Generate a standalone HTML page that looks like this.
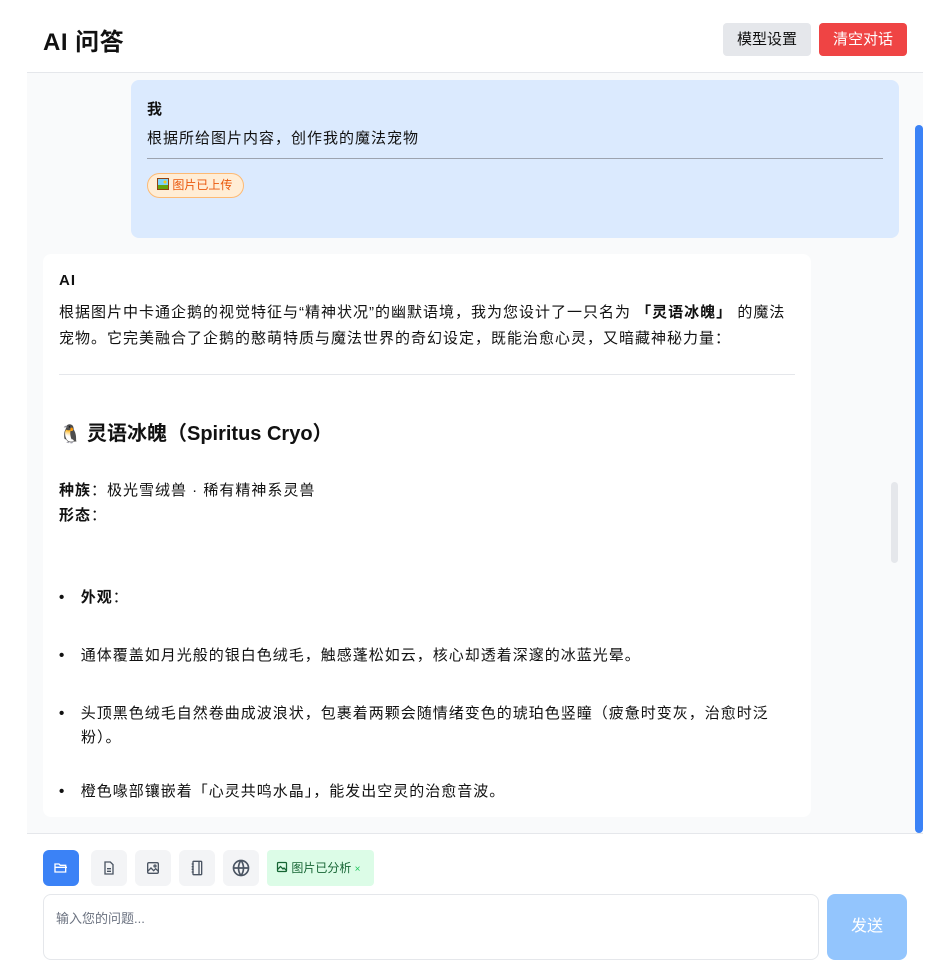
<!DOCTYPE html>
<html><head><meta charset="utf-8"><style>
*{box-sizing:border-box;margin:0;padding:0}
body{width:945px;height:966px;background:#fff;font-family:"Liberation Sans","Noto Sans CJK SC",sans-serif;color:#111;position:relative;overflow:hidden}
.a{position:absolute}
.t{font-size:15px;color:#111;white-space:nowrap;letter-spacing:1px}
.ib{position:absolute;top:850px;width:36px;height:36px;border-radius:6px;background:#f3f4f6;display:flex;align-items:center;justify-content:center}
</style></head><body>
<div class="a" style="left:43px;top:22px;font-size:24px;font-weight:bold;letter-spacing:0.5px">AI 问答</div>
<div class="a" style="left:723px;top:23px;width:88px;height:33px;background:#e5e7eb;border-radius:4px;font-size:15px;text-align:center;line-height:33px">模型设置</div>
<div class="a" style="left:819px;top:23px;width:88px;height:33px;background:#ef4444;color:#fff;border-radius:4px;font-size:15px;text-align:center;line-height:33px">清空对话</div>
<div class="a" style="left:27px;top:72px;width:896px;height:1px;background:#e5e7eb"></div>
<div class="a" style="left:27px;top:73px;width:896px;height:760px;background:#f9fafb"></div>
<div class="a" style="left:27px;top:833px;width:896px;height:1px;background:#e5e7eb"></div>
<div class="a" style="left:915px;top:125px;width:8px;height:708px;background:#3b82f6;border-radius:4px"></div>
<div class="a" style="left:891px;top:482px;width:7px;height:81px;background:#e5e7eb;border-radius:4px"></div>

<div class="a" style="left:131px;top:80px;width:768px;height:158px;background:#dbeafe;border-radius:8px"></div>
<div class="a t" style="left:147px;top:98px;font-weight:bold">我</div>
<div class="a t" style="left:147px;top:127px">根据所给图片内容，创作我的魔法宠物</div>
<div class="a" style="left:147px;top:158px;width:736px;height:1px;background:#9ca3af"></div>
<div class="a" style="left:147px;top:173px;width:97px;height:25px;background:#ffedd5;border:1px solid #fdba74;border-radius:13px;font-size:12px;color:#ea580c;line-height:23px;padding-left:9px;white-space:nowrap"><svg width="12" height="12" viewBox="0 0 12 12" style="vertical-align:-1px"><rect x="0.5" y="0.5" width="11" height="11" fill="#7dd3fc" stroke="#92400e"/><rect x="1" y="7" width="10" height="4" fill="#65a30d"/><circle cx="8" cy="4" r="1.5" fill="#facc15"/></svg> 图片已上传</div>

<div class="a" style="left:43px;top:254px;width:768px;height:563px;background:#fff;border-radius:8px"></div>
<div class="a t" style="left:59px;top:272px;font-weight:bold">AI</div>
<div class="a t" style="left:59px;top:301px">根据图片中卡通企鹅的视觉特征与“精神状况”的幽默语境，我为您设计了一只名为 <b>「灵语冰魄」</b> 的魔法</div>
<div class="a t" style="left:59px;top:327px">宠物。它完美融合了企鹅的憨萌特质与魔法世界的奇幻设定，既能治愈心灵，又暗藏神秘力量：</div>
<div class="a" style="left:59px;top:374px;width:736px;height:1px;background:#e5e7eb"></div>
<div class="a" style="left:59px;top:417px;font-size:20px;font-weight:bold;white-space:nowrap"><span style="font-size:18px">🐧</span>&nbsp;灵语冰魄（Spiritus Cryo）</div>
<div class="a t" style="left:59px;top:479px"><b>种族</b>：极光雪绒兽 · 稀有精神系灵兽</div>
<div class="a t" style="left:59px;top:504px"><b>形态</b>：</div>
<div class="a t" style="left:59px;top:586px"><b>•</b>&nbsp;&nbsp;&nbsp;<b>外观</b>：</div>
<div class="a t" style="left:59px;top:644px"><b>•</b>&nbsp;&nbsp;&nbsp;通体覆盖如月光般的银白色绒毛，触感蓬松如云，核心却透着深邃的冰蓝光晕。</div>
<div class="a t" style="left:59px;top:702px"><b>•</b>&nbsp;&nbsp;&nbsp;头顶黑色绒毛自然卷曲成波浪状，包裹着两颗会随情绪变色的琥珀色竖瞳（疲惫时变灰，治愈时泛</div>
<div class="a t" style="left:81px;top:726px">粉）。</div>
<div class="a t" style="left:59px;top:780px"><b>•</b>&nbsp;&nbsp;&nbsp;橙色喙部镶嵌着「心灵共鸣水晶」，能发出空灵的治愈音波。</div>

<div class="ib" style="left:43px;background:#3b82f6"><svg width="16" height="16" viewBox="0 0 24 24" fill="none" stroke="#fff" stroke-width="2"><path d="M3 6h6l2 2h8v10H3z M3 11h18"/></svg></div>
<div class="ib" style="left:91px"><svg width="16" height="18" viewBox="0 0 24 24" fill="none" stroke="#4b5563" stroke-width="2"><path d="M6 3h8l4 4v14H6z M9 13h6M9 17h6"/></svg></div>
<div class="ib" style="left:135px"><svg width="16" height="16" viewBox="0 0 24 24" fill="none" stroke="#4b5563" stroke-width="2"><rect x="4" y="4" width="16" height="16" rx="2"/><path d="M4 17l5-5 4 4 3-3 4 4"/><circle cx="15" cy="9" r="1.5"/></svg></div>
<div class="ib" style="left:179px"><svg width="16" height="20" viewBox="0 0 24 24" fill="none" stroke="#4b5563" stroke-width="2"><rect x="6" y="2" width="13" height="20" rx="1"/><path d="M4 6h3M4 10h3M4 14h3M4 18h3M15 2v20"/></svg></div>
<div class="ib" style="left:223px"><svg width="20" height="20" viewBox="0 0 24 24" fill="none" stroke="#4b5563" stroke-width="2"><circle cx="12" cy="12" r="9"/><path d="M3 12h18M12 3c-4 5-4 13 0 18M12 3c4 5 4 13 0 18"/></svg></div>
<div class="a" style="left:267px;top:850px;width:107px;height:36px;background:#dcfce7;border-radius:4px;font-size:12px;color:#166534;line-height:36px;padding-left:9px;white-space:nowrap"><svg width="12" height="12" viewBox="0 0 24 24" fill="none" stroke="#166534" stroke-width="2.5" style="vertical-align:-1px"><rect x="3" y="3" width="18" height="18" rx="2"/><path d="M3 17l6-6 5 5 2-2 5 5"/></svg> 图片已分析 <span style="color:#22c55e;font-size:10px">×</span></div>
<div class="a" style="left:43px;top:894px;width:776px;height:66px;border:1px solid #e5e7eb;border-radius:8px;font-size:13px;color:#6b7280;padding:13px 12px">输入您的问题...</div>
<div class="a" style="left:827px;top:894px;width:80px;height:66px;background:#93c5fd;border-radius:8px;color:#fff;font-size:16px;text-align:center;line-height:66px">发送</div>
</body></html>
